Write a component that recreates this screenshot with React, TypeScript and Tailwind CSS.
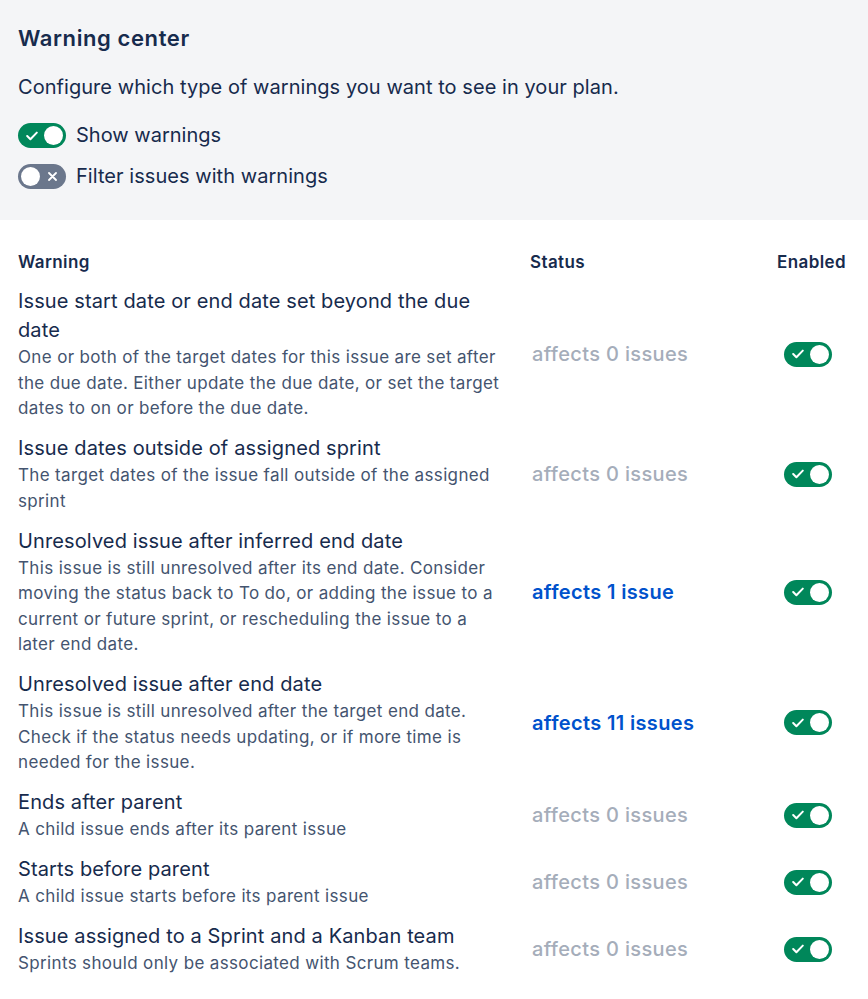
import React from "react";

function Toggle({ on }: { on: boolean }) {
  if (on) {
    return (
      <div className="flex h-[25px] w-[48px] shrink-0 items-center justify-between rounded-full bg-[#00875A] pl-[8px] pr-[3px]">
        <svg width="12" height="10" viewBox="0 0 12 10" fill="none">
          <path d="M1.2 5 L4.4 8.2 L10.8 1.6" stroke="white" strokeWidth="2" strokeLinecap="round" strokeLinejoin="round" />
        </svg>
        <div className="h-[19px] w-[19px] rounded-full bg-white" />
      </div>
    );
  }
  return (
    <div className="flex h-[25px] w-[48px] shrink-0 items-center justify-between rounded-full bg-[#6B778C] pl-[3px] pr-[9px]">
      <div className="h-[19px] w-[19px] rounded-full bg-white" />
      <svg width="9" height="9" viewBox="0 0 9 9" fill="none">
        <path d="M1 1 L8 8 M8 1 L1 8" stroke="white" strokeWidth="1.8" strokeLinecap="round" />
      </svg>
    </div>
  );
}

type Row = { title: string; desc: string; count: number };

const rows: Row[] = [
  {
    title: "Issue start date or end date set beyond the due date",
    desc: "One or both of the target dates for this issue are set after the due date. Either update the due date, or set the target dates to on or before the due date.",
    count: 0,
  },
  {
    title: "Issue dates outside of assigned sprint",
    desc: "The target dates of the issue fall outside of the assigned sprint",
    count: 0,
  },
  {
    title: "Unresolved issue after inferred end date",
    desc: "This issue is still unresolved after its end date. Consider moving the status back to To do, or adding the issue to a current or future sprint, or rescheduling the issue to a later end date.",
    count: 1,
  },
  {
    title: "Unresolved issue after end date",
    desc: "This issue is still unresolved after the target end date. Check if the status needs updating, or if more time is needed for the issue.",
    count: 11,
  },
  { title: "Ends after parent", desc: "A child issue ends after its parent issue", count: 0 },
  { title: "Starts before parent", desc: "A child issue starts before its parent issue", count: 0 },
  {
    title: "Issue assigned to a Sprint and a Kanban team",
    desc: "Sprints should only be associated with Scrum teams.",
    count: 0,
  },
];

export default function App() {
  return (
    <div
      className="min-h-[999px] w-[868px] bg-white text-[#172B4D]"
      style={{ fontFamily: 'Inter, "Noto Sans", sans-serif' }}
    >
      <div className="bg-[#F4F5F7] px-[18px] pb-[31px] pt-[24px]">
        <h1 className="text-[22px] font-semibold leading-[28px] tracking-[0.6px]">Warning center</h1>
        <p className="mt-[21px] text-[20px] leading-[28px] tracking-[0.05px]">
          Configure which type of warnings you want to see in your plan.
        </p>
        <div className="mt-[22px] flex flex-col gap-[16px]">
          <div className="flex items-center gap-[10px]">
            <Toggle on={true} />
            <span className="text-[20px] leading-[25px]">Show warnings</span>
          </div>
          <div className="flex items-center gap-[10px]">
            <Toggle on={false} />
            <span className="text-[20px] leading-[25px] tracking-[0.05px]">Filter issues with warnings</span>
          </div>
        </div>
      </div>

      <div className="pl-[18px] pr-[22px] pt-[30px]">
        <div className="grid grid-cols-[512px_1fr_69px] pb-[7px] text-[17px] font-semibold leading-[24px] tracking-[0.4px]">
          <div>Warning</div>
          <div>Status</div>
          <div className="text-right">Enabled</div>
        </div>
        {rows.map((r) => (
          <div key={r.title} className="grid grid-cols-[512px_1fr_69px] items-center pb-[6.5px] pt-[6px]">
            <div className="w-[490px]">
              <div className="text-[20px] leading-[29px] tracking-[0.12px] text-[#172B4D]">{r.title}</div>
              <div className="text-[17px] leading-[25.5px] tracking-[0.35px] text-[#44546F]">{r.desc}</div>
            </div>
            <div
              className={
                r.count > 0
                  ? "pl-[2px] text-[20px] font-semibold tracking-[0.35px] text-[#0052CC]"
                  : "pl-[2px] text-[20px] font-medium tracking-[0.35px] text-[#A5ADBA]"
              }
            >
              affects {r.count} {r.count === 1 ? "issue" : "issues"}
            </div>
            <div className="flex pl-[7px]">
              <Toggle on={true} />
            </div>
          </div>
        ))}
      </div>
    </div>
  );
}
